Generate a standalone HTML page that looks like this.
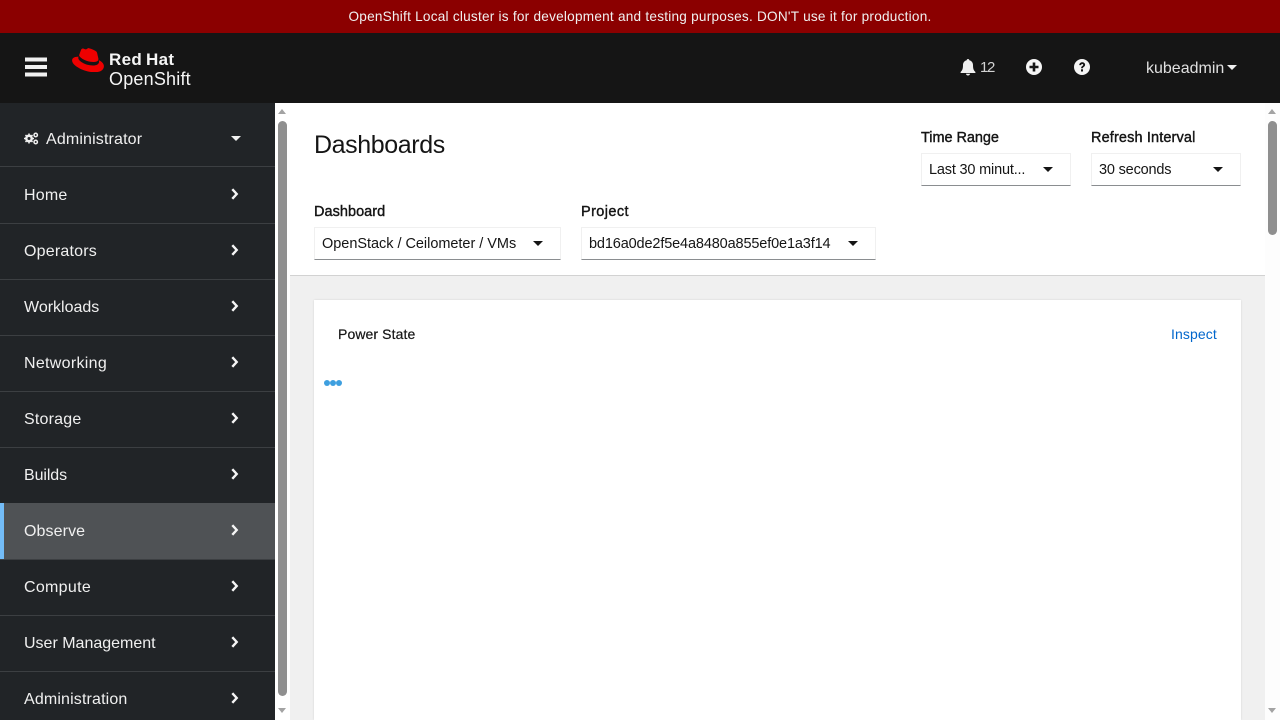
<!DOCTYPE html>
<html><head><meta charset="utf-8"><style>
html,body{margin:0;padding:0;width:1280px;height:720px;overflow:hidden;background:#fff;font-family:"Liberation Sans",sans-serif;color:#151515}
#root{position:relative;width:1280px;height:720px;overflow:hidden;contain:strict}
.a{position:absolute;white-space:nowrap}
.t{position:absolute;white-space:nowrap;line-height:20px}
.nav{position:absolute;left:0;width:275px;height:56px;border-bottom:1px solid #3c3f42;box-sizing:content-box}
.nav span{position:absolute;left:24px;top:19px;font-size:16px;line-height:20px;color:#f0f0f0;white-space:nowrap;letter-spacing:.15px}
.nav svg{position:absolute;left:231px;top:21px}
.sel{position:absolute;height:33px;box-sizing:border-box;border:1px solid #f0f0f0;border-bottom:1px solid #8a8d90;background:#fff}
.sel span{position:absolute;left:7px;top:6px;font-size:14.5px;line-height:20px;color:#151515;white-space:nowrap}
.lab{position:absolute;font-size:14.5px;font-weight:500;line-height:20px;white-space:nowrap;-webkit-text-stroke:.4px #151515}
.car{position:absolute;width:0;height:0;border-left:5px solid transparent;border-right:5px solid transparent;border-top:5.5px solid #151515}
</style></head><body><div id="root">
<div class="a" style="left:0;top:0;width:1280px;height:33px;background:#8b0000"></div>
<div class="t" style="left:0;top:7px;width:1280px;text-align:center;color:#f0f0f0;font-size:13.6px;letter-spacing:.24px">OpenShift Local cluster is for development and testing purposes. DON'T use it for production.</div>
<div class="a" style="left:0;top:33px;width:1280px;height:70px;background:#151515"></div>

<svg class="a" style="left:25px;top:55px" width="22" height="24" viewBox="0 0 22 24"><rect y="2.500" width="22" height="4" fill="#f0f0f0"/><rect y="10" width="22" height="4" fill="#f0f0f0"/><rect y="17.500" width="22" height="4" fill="#f0f0f0"/></svg>

<svg class="a" style="left:72px;top:48px" width="32" height="24.400" viewBox="0 0 191.400 145">
<path d="M127.470 83.490c12.510 0 30.610-2.580 30.610-17.460a14 14 0 0 0-.31-3.420l-7.450-32.360c-1.720-7.120-3.230-10.350-15.730-16.600C124.890 8.690 103.760.5 97.510.5 91.690.5 90 8 83.060 8c-6.680 0-11.640-5.600-17.890-5.600-6 0-9.910 4.090-12.930 12.500 0 0-8.410 23.720-9.490 27.160A6.430 6.430 0 0 0 42.530 44c0 9.220 36.300 39.450 84.940 39.450M160 72.070c1.730 8.190 1.730 9.050 1.730 10.130 0 14-15.740 21.770-36.430 21.770C78.540 104 37.580 76.600 37.580 58.490a18.450 18.450 0 0 1 1.510-7.330C22.270 52 .5 55 .5 74.220c0 31.480 74.590 70.280 133.650 70.280 45.280 0 56.700-20.480 56.700-36.650 0-12.720-11-27.160-30.830-35.780" fill="#ee0000"/>
</svg>
<div class="t" style="left:109px;top:50px;font-size:17px;font-weight:bold;color:#f5f5f5;letter-spacing:.3px;word-spacing:-1px">Red Hat</div>
<div class="t" style="left:109px;top:69px;font-size:18px;color:#f5f5f5;letter-spacing:.2px">OpenShift</div>

<svg class="a" style="left:960px;top:59px" width="16" height="17" viewBox="0 0 16 17"><path d="M8 0c.8 0 1.300.6 1.300 1.300C11.600 1.900 13 3.800 13 6c0 4 .8 5.500 2.400 7v1H.6v-1C2.200 11.500 3 10 3 6c0-2.200 1.400-4.100 3.700-4.700C6.700.6 7.200 0 8 0z" fill="#f0f0f0"/><path d="M6 14.800h4C10 15.900 9.100 16.500 8 16.500S6 15.900 6 14.800z" fill="#f0f0f0"/></svg>
<div class="t" style="left:980px;top:58px;font-size:15px;color:#d2d2d2;letter-spacing:-1.400px">12</div>
<svg class="a" style="left:1026px;top:59px" width="16" height="16" viewBox="0 0 16 16"><circle cx="8" cy="8" r="8" fill="#f5f5f5"/><path d="M6.700 3.500h2.600v3.200h3.200v2.600H9.300v3.200H6.700V9.300H3.500V6.700h3.200z" fill="#151515"/></svg>
<svg class="a" style="left:1074px;top:59px" width="16" height="16" viewBox="0 0 16 16"><circle cx="8" cy="8" r="8" fill="#f5f5f5"/><path d="M5.200 6.100C5.300 4.500 6.500 3.300 8.200 3.300c1.600 0 2.900 1 2.900 2.500 0 1.200-.7 1.800-1.500 2.300-.6.400-.7.600-.7 1.200H7.100c0-1.100.3-1.700 1.100-2.200.6-.4 1-.7 1-1.200 0-.6-.5-.9-1-.9-.6 0-1 .4-1.100 1.100z" fill="#151515"/><rect x="7" y="10.300" width="2" height="2.200" fill="#151515"/></svg>
<div class="t" style="left:1146px;top:59px;font-size:16px;color:#e0e0e0">kubeadmin</div>
<div class="car" style="left:1227px;top:65px;border-top-color:#f0f0f0"></div>

<div class="a" style="left:0;top:103px;width:275px;height:617px;background:#212427"></div>
<div class="nav" style="top:103px;height:63px">
<svg style="left:24px;top:29px" width="15" height="13" viewBox="0 0 15 13"><circle cx="5" cy="6.500" r="2.900" fill="none" stroke="#f0f0f0" stroke-width="2.100"/><path d="M5 1.500v10M0 6.500h10M1.500 3l7 7M8.500 3l-7 7" stroke="#f0f0f0" stroke-width="1.500"/><circle cx="5" cy="6.500" r="1.500" fill="#212427"/><circle cx="11.700" cy="3" r="1.700" fill="none" stroke="#f0f0f0" stroke-width="1.500"/><circle cx="11.700" cy="10" r="1.700" fill="none" stroke="#f0f0f0" stroke-width="1.500"/></svg>
<span style="left:46px;top:27px">Administrator</span>
<div class="car" style="left:231px;top:33px;border-top-color:#f0f0f0"></div>
</div>
<div class="nav" style="top:167px"><span style="letter-spacing:.2px">Home</span><svg width="8" height="12" viewBox="0 0 8 12"><path d="M1.300 1.200L5.700 6 1.300 10.800" fill="none" stroke="#f5f5f5" stroke-width="2.400"/></svg></div>
<div class="nav" style="top:223px"><span style="letter-spacing:.2px">Operators</span><svg width="8" height="12" viewBox="0 0 8 12"><path d="M1.300 1.200L5.700 6 1.300 10.800" fill="none" stroke="#f5f5f5" stroke-width="2.400"/></svg></div>
<div class="nav" style="top:279px"><span style="letter-spacing:0">Workloads</span><svg width="8" height="12" viewBox="0 0 8 12"><path d="M1.300 1.200L5.700 6 1.300 10.800" fill="none" stroke="#f5f5f5" stroke-width="2.400"/></svg></div>
<div class="nav" style="top:335px"><span style="letter-spacing:.3px">Networking</span><svg width="8" height="12" viewBox="0 0 8 12"><path d="M1.300 1.200L5.700 6 1.300 10.800" fill="none" stroke="#f5f5f5" stroke-width="2.400"/></svg></div>
<div class="nav" style="top:391px"><span style="letter-spacing:.2px">Storage</span><svg width="8" height="12" viewBox="0 0 8 12"><path d="M1.300 1.200L5.700 6 1.300 10.800" fill="none" stroke="#f5f5f5" stroke-width="2.400"/></svg></div>
<div class="nav" style="top:447px"><span style="letter-spacing:-.1px">Builds</span><svg width="8" height="12" viewBox="0 0 8 12"><path d="M1.300 1.200L5.700 6 1.300 10.800" fill="none" stroke="#f5f5f5" stroke-width="2.400"/></svg></div>
<div class="nav" style="top:503px;background:#4f5255"><div class="a" style="left:0;top:0;width:4px;height:56px;background:#73bcf7"></div><span style="letter-spacing:.1px">Observe</span><svg width="8" height="12" viewBox="0 0 8 12"><path d="M1.300 1.200L5.700 6 1.300 10.800" fill="none" stroke="#f5f5f5" stroke-width="2.400"/></svg></div>
<div class="nav" style="top:559px"><span style="letter-spacing:.3px">Compute</span><svg width="8" height="12" viewBox="0 0 8 12"><path d="M1.300 1.200L5.700 6 1.300 10.800" fill="none" stroke="#f5f5f5" stroke-width="2.400"/></svg></div>
<div class="nav" style="top:615px"><span style="letter-spacing:0">User Management</span><svg width="8" height="12" viewBox="0 0 8 12"><path d="M1.300 1.200L5.700 6 1.300 10.800" fill="none" stroke="#f5f5f5" stroke-width="2.400"/></svg></div>
<div class="nav" style="top:671px;height:48px;border-bottom:0"><span>Administration</span><svg width="8" height="12" viewBox="0 0 8 12"><path d="M1.300 1.200L5.700 6 1.300 10.800" fill="none" stroke="#f5f5f5" stroke-width="2.400"/></svg></div>

<div class="a" style="left:275px;top:103px;width:15px;height:617px;background:#fff"></div>
<div class="a" style="left:278px;top:121px;width:9px;height:575px;background:#8f8f8f;border-radius:5px"></div>
<div class="a" style="left:278px;top:109px;width:0;height:0;border-left:4.500px solid transparent;border-right:4.500px solid transparent;border-bottom:5px solid #a3a3a3"></div>
<div class="a" style="left:278px;top:708px;width:0;height:0;border-left:4.500px solid transparent;border-right:4.500px solid transparent;border-top:5px solid #a3a3a3"></div>

<div class="a" style="left:290px;top:275px;width:975px;height:445px;background:#f0f0f0;border-top:1px solid #d2d2d2;box-sizing:border-box"></div>
<div class="a" style="left:314px;top:300px;width:927px;height:420px;background:#fff;box-shadow:0 0 2px rgba(3,3,3,.12);clip-path:inset(-3px -3px 0 -3px)"></div>

<div class="t" style="left:314px;top:131px;font-size:25px;line-height:28px;color:#151515;letter-spacing:-.4px">Dashboards</div>

<div class="lab" style="left:921px;top:128px;letter-spacing:-.05px">Time Range</div>
<div class="sel" style="left:921px;top:153px;width:150px"><span style="letter-spacing:-.18px">Last 30 minut...</span><div class="car" style="left:121px;top:13px"></div></div>
<div class="lab" style="left:1091px;top:128px;letter-spacing:.13px">Refresh Interval</div>
<div class="sel" style="left:1091px;top:153px;width:150px"><span style="letter-spacing:-.18px">30 seconds</span><div class="car" style="left:121px;top:13px"></div></div>
<div class="lab" style="left:314px;top:202px;letter-spacing:.03px">Dashboard</div>
<div class="sel" style="left:314px;top:227px;width:247px"><span style="letter-spacing:-.03px">OpenStack / Ceilometer / VMs</span><div class="car" style="left:218px;top:13px"></div></div>
<div class="lab" style="left:581px;top:202px;letter-spacing:.4px">Project</div>
<div class="sel" style="left:581px;top:227px;width:295px"><span style="letter-spacing:-.14px">bd16a0de2f5e4a8480a855ef0e1a3f14</span><div class="car" style="left:266px;top:13px"></div></div>

<div class="t" style="left:338px;top:324px;font-size:14px;color:#151515;letter-spacing:.1px;-webkit-text-stroke:.2px #151515">Power State</div>
<div class="t" style="left:1171px;top:324px;font-size:14px;color:#0066cc;letter-spacing:.1px">Inspect</div>
<div class="a" style="left:324px;top:380px;width:6px;height:6px;border-radius:50%;background:#3e9fdf"></div>
<div class="a" style="left:330px;top:380px;width:6px;height:6px;border-radius:50%;background:#3e9fdf"></div>
<div class="a" style="left:336px;top:380px;width:6px;height:6px;border-radius:50%;background:#3e9fdf"></div>

<div class="a" style="left:1265px;top:103px;width:15px;height:617px;background:#fdfdfd"></div>
<div class="a" style="left:1268px;top:121px;width:9px;height:114px;background:#8f8f8f;border-radius:5px"></div>
<div class="a" style="left:1268px;top:109px;width:0;height:0;border-left:4.500px solid transparent;border-right:4.500px solid transparent;border-bottom:5px solid #a3a3a3"></div>
<div class="a" style="left:1268px;top:708px;width:0;height:0;border-left:4.500px solid transparent;border-right:4.500px solid transparent;border-top:5px solid #a3a3a3"></div>
</div></body></html>
